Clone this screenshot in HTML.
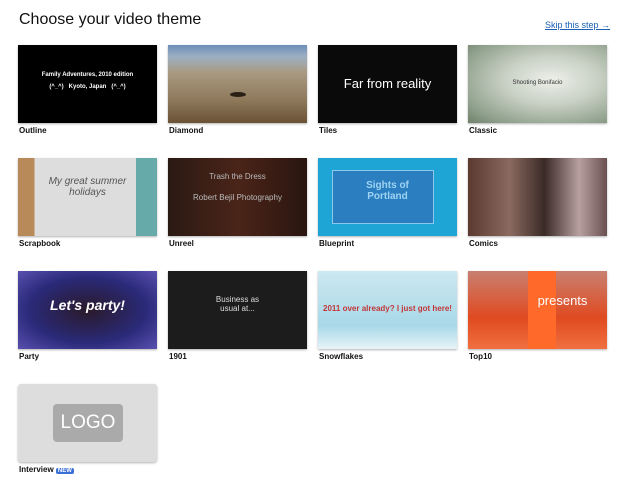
<!DOCTYPE html>
<html><head><meta charset="utf-8"><style>
body{margin:0;width:640px;height:495px;background:#fff;font-family:"Liberation Sans",sans-serif;overflow:hidden;position:relative}
h1{position:absolute;left:19px;top:11px;margin:0;font-size:16px;font-weight:normal;color:#111}
.skip{position:absolute;left:545px;top:20px;font-size:9px;color:#1a5fb4;text-decoration:underline}
.t{position:absolute;width:139px;height:78px;overflow:hidden;box-shadow:0 1px 2px rgba(0,0,0,.3)}
.l{position:absolute;font-size:8px;font-weight:bold;color:#111}
.c{position:absolute;left:0;right:0;text-align:center;color:#fff}
</style></head><body>
<h1>Choose your video theme</h1>
<div class="skip">Skip this step →</div>

<div class="t" style="left:18px;top:45px;background:#000"><div class="c" style="top:27px;font-size:6px;font-weight:bold">Family Adventures, 2010 edition</div><div class="c" style="top:39px;font-size:6px;font-weight:bold">(^_^)&nbsp;&nbsp; Kyoto, Japan &nbsp;&nbsp;(^_^)</div></div>
<div class="l" style="left:19px;top:126px">Outline</div>

<div class="t" style="left:168px;top:45px;background:linear-gradient(#6d8eb8 0%,#9cb0c2 15%,#a99a82 35%,#8f7a5c 70%,#6a5236 100%)"><div style="position:absolute;left:62px;top:47px;width:16px;height:5px;background:#2a2016;border-radius:50%"></div></div>
<div class="l" style="left:169px;top:126px">Diamond</div>

<div class="t" style="left:318px;top:45px;background:#0a0a0a"><div class="c" style="top:31px;font-size:13px">Far from reality</div></div>
<div class="l" style="left:319px;top:126px">Tiles</div>

<div class="t" style="left:468px;top:45px;background:radial-gradient(ellipse at 60% 45%,#eef0ea 0%,#c8d0c4 40%,#8fa08c 80%,#6f806a 100%)"><div class="c" style="top:35px;font-size:6px;color:#333">Shooting Bonifacio</div></div>
<div class="l" style="left:469px;top:126px">Classic</div>

<div class="t" style="left:18px;top:158px;background:linear-gradient(90deg,#b88a5a 0 12%,#ddd 12% 85%,#6aa 85%)"><div class="c" style="top:18px;font-size:10px;color:#555;font-style:italic">My great summer<br>holidays</div></div>
<div class="l" style="left:19px;top:239px">Scrapbook</div>

<div class="t" style="left:168px;top:158px;background:linear-gradient(90deg,#2a1a14,#4a2418 50%,#2a1510)"><div class="c" style="top:14px;font-size:8px;color:#bbb">Trash the Dress</div><div class="c" style="top:35px;font-size:8px;color:#bbb">Robert Bejil Photography</div></div>
<div class="l" style="left:169px;top:239px">Unreel</div>

<div class="t" style="left:318px;top:158px;background:#1fa4d6"><div style="position:absolute;left:14px;top:12px;width:100px;height:52px;background:#2b7fc0;border:1px solid #8cc8ea"></div><div class="c" style="top:22px;font-size:10px;font-weight:bold;color:#9fd3f2">Sights of<br>Portland</div></div>
<div class="l" style="left:319px;top:239px">Blueprint</div>

<div class="t" style="left:468px;top:158px;background:linear-gradient(90deg,#5a3a30,#8a6a60 30%,#3a2a26 55%,#b8a0a0 80%,#6a5050)"></div>
<div class="l" style="left:469px;top:239px">Comics</div>

<div class="t" style="left:18px;top:271px;background:radial-gradient(ellipse at 50% 50%,#2a1a2a,#2a2a7a 60%,#5a50b0)"><div class="c" style="top:26px;font-size:14px;font-weight:bold;font-style:italic">Let's party!</div></div>
<div class="l" style="left:19px;top:352px">Party</div>

<div class="t" style="left:168px;top:271px;background:#1c1c1c"><div class="c" style="top:24px;font-size:8px;color:#ddd">Business as<br>usual at...</div></div>
<div class="l" style="left:169px;top:352px">1901</div>

<div class="t" style="left:318px;top:271px;background:linear-gradient(#cde8f0,#a8d8e8 70%,#e8f4f8)"><div class="c" style="top:33px;font-size:8px;font-weight:bold;color:#c23838">2011 over already? I just got here!</div></div>
<div class="l" style="left:319px;top:352px">Snowflakes</div>

<div class="t" style="left:468px;top:271px;background:linear-gradient(#c88070,#e04a20 60%,#f07040)"><div style="position:absolute;left:60px;top:0;width:28px;height:78px;background:#ff6a2a"></div><div class="c" style="top:22px;left:50px;font-size:13px">presents</div></div>
<div class="l" style="left:469px;top:352px">Top10</div>

<div class="t" style="left:18px;top:384px;background:#ddd;border-radius:3px"><div style="position:absolute;left:35px;top:20px;width:70px;height:38px;background:#aaa;border-radius:4px;color:#fff;font-size:19px;text-align:center;line-height:38px">LOGO</div></div>
<div class="l" style="left:19px;top:465px">Interview <span style="background:#3a6fd6;color:#fff;font-size:6px;padding:0 2px;border-radius:2px">NEW</span></div>
</body></html>
